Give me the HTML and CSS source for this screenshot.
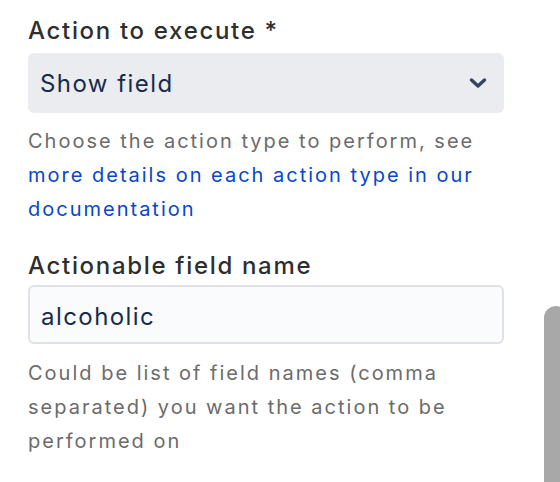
FILE: index.html
```html
<!DOCTYPE html>
<html>
<head>
<meta charset="utf-8">
<link rel="stylesheet" href="styles.css">
</head>
<body>
<div class="form">
  <div class="field">
    <label class="label label-first">Action to execute *</label>
    <div class="select">
      <span class="select-value">Show field</span>
      <svg class="chevron" width="18" height="12" viewBox="0 0 18 12"><path d="M2.5 3 L9 9 L15.5 3" fill="none" stroke="#344563" stroke-width="3.4" stroke-linecap="round" stroke-linejoin="round"/></svg>
    </div>
    <p class="help">Choose the action type to perform, see <a href="#" class="link">more details on each action type in our documentation</a></p>
  </div>
  <div class="field">
    <label class="label label-second">Actionable field name</label>
    <input class="input" type="text" value="alcoholic" readonly>
    <p class="help help-second">Could be list of field names (comma separated) you want the action to be performed on</p>
  </div>
</div>
<div class="scroll-thumb"></div>
</body>
</html>
```

FILE: styles.css
```css
html, body {
  margin: 0;
  padding: 0;
  overflow: hidden;
  background: #ffffff;
  width: 560px;
  height: 482px;
}

body {
  font-family: Inter, "Noto Sans", "Liberation Sans", sans-serif;
  position: relative;
}

.form {
  width: 476px;
  padding-left: 28px;
  padding-top: 16px;
}

.field {
  display: flex;
  flex-direction: column;
}

.label {
  display: block;
  font-size: 24px;
  line-height: 30px;
  font-weight: 500;
  letter-spacing: 0.07em;
  color: #2e2e2e;
}

.label-first {
  margin-bottom: 7px;
}

.label-second {
  margin-top: 25px;
  margin-bottom: 4px;
}

.select {
  box-sizing: border-box;
  height: 60px;
  background: #ebecf0;
  border-radius: 6px;
  display: flex;
  align-items: center;
  justify-content: space-between;
  padding: 2px 17px 0 12px;
}

.select-value {
  font-size: 24px;
  color: #172b4d;
  line-height: 30px;
  letter-spacing: 0.06em;
}

.chevron {
  display: block;
  margin-top: -2px;
}

.help {
  margin: 11px 0 0 0;
  font-size: 20px;
  line-height: 34px;
  letter-spacing: 0.1em;
  color: #6b6b6b;
}

.help-second {
  margin-top: 12px;
}

.link {
  color: #0747c9;
  text-decoration: none;
}

.input {
  box-sizing: border-box;
  width: 476px;
  height: 59px;
  margin: 0;
  border: 2px solid #dfe1e6;
  border-radius: 6px;
  background: #fafbfc;
  padding: 4px 0 0 11px;
  font-family: Inter, "Noto Sans", "Liberation Sans", sans-serif;
  font-size: 24px;
  letter-spacing: 0.06em;
  color: #172b4d;
  outline: none;
}

.scroll-thumb {
  position: absolute;
  left: 544px;
  top: 306px;
  width: 24px;
  height: 220px;
  border-radius: 12px;
  background: #a8a8a8;
}
```
